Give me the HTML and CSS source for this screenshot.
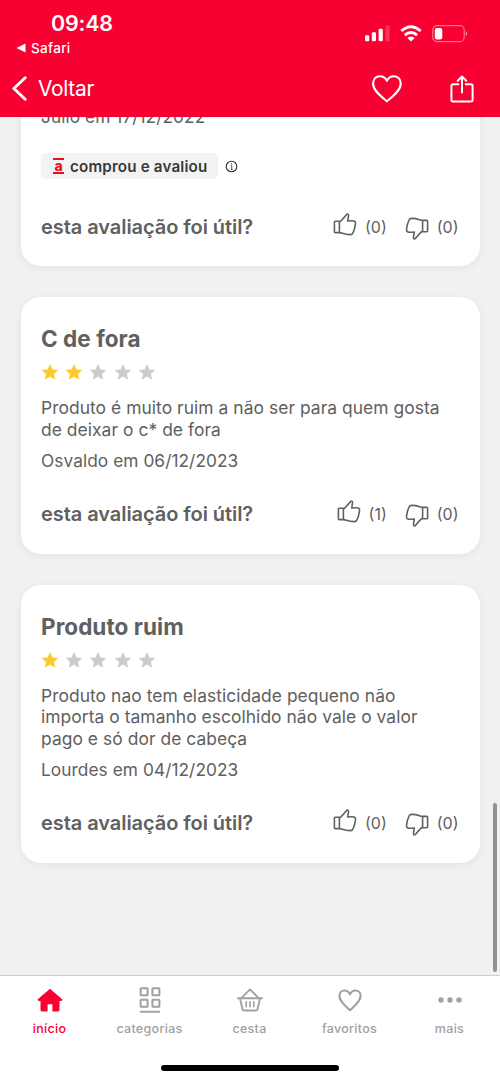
FILE: index.html
```html
<!DOCTYPE html>
<html lang="pt-BR">
<head>
<meta charset="utf-8">
<title>Avaliações</title>
<link rel="stylesheet" href="styles.css">
</head>
<body>
<svg class="defs" width="0" height="0">
  <symbol id="star" viewBox="0 0 18 18"><path d="M9 .9l2.400 5.500 5.900.5-4.400 4 1.300 5.800L9 13.600l-5.200 3.100 1.300-5.800-4.400-4 5.900-.5z"/></symbol>
  <symbol id="thumb" viewBox="0 0 24 24"><path d="M1.400 9.200q0-.9.900-.9h4.100v11.300H2.300q-.9 0-.9-.9zM6.400 9C9.200 7.200 11.600 3.900 13.600 1.500q.8-.8 1.500-.1.600.6.400 1.500l-.8 5.100q4.500-.5 6.400.1 1.700.5 1.400 2.500-.6 5-2.200 8.700-.8 2.200-2.600 2.300-4.400.1-8.300-1.400-1.500-.6-3-.6" fill="none" stroke="currentColor" stroke-width="1.600" stroke-linejoin="round" stroke-linecap="round"/></symbol>
</svg>
<div class="app">
  <header class="header">
    <div class="status">
      <div class="status-left">
        <div class="clock">09:48</div>
        <div class="back-app"><svg width="10" height="10" viewBox="0 0 10 10"><path d="M.5 5L9.500.6v8.800z" fill="#fff"/></svg><span>Safari</span></div>
      </div>
      <div class="status-icons">
        <svg width="25" height="17" viewBox="0 0 25 17" fill="#fff"><rect y="10.300" width="4.200" height="6" rx="1.200"/><rect x="6.800" y="7.300" width="4.200" height="9" rx="1.200"/><rect x="13.600" y="3.700" width="4.200" height="12.600" rx="1.200"/><rect x="20.400" y=".3" width="4.200" height="16" rx="1.200" opacity=".2"/></svg>
        <svg width="22" height="17" viewBox="0 0 22 17" fill="none" stroke="#fff" stroke-width="2.900"><path d="M1.300 6q9.700-8.500 19.400 0M4.800 10.200q6.200-5.400 12.400 0"/><path d="M7.400 13q3.600-2.900 7.200 0L11 16.600z" fill="#fff" stroke="none"/></svg>
        <svg width="36" height="18" viewBox="0 0 36 18"><rect x=".7" y=".7" width="31.500" height="16" rx="4.500" fill="none" stroke="#fff" stroke-opacity=".45" stroke-width="1.200"/><rect x="2.800" y="2.900" width="7.500" height="11.600" rx="2.300" fill="#fff"/><path d="M33.600 6v5q1.700-.7 1.700-2.500T33.600 6" fill="#fff" opacity=".5"/></svg>
      </div>
    </div>
    <nav class="navbar">
      <svg class="chevron" width="15" height="25" viewBox="0 0 15 25"><path d="M13.200 1.700L1.900 12.500l11.300 10.800" fill="none" stroke="#fff" stroke-width="2.900" stroke-linecap="round" stroke-linejoin="round"/></svg>
      <span class="nav-title">Voltar</span>
      <svg class="nav-heart" width="30" height="28" viewBox="0 0 30 28"><path d="M14.900 26.300C9.800 21.800 1.100 16 1.100 8.800 1.100 4.300 4 1.200 8 1.200q4.700 0 6.900 4.600 2.200-4.600 6.900-4.600c4 0 6.900 3.100 6.900 7.600 0 7.200-8.700 13-13.800 17.500z" fill="none" stroke="#fff" stroke-width="2.100" stroke-linejoin="round"/></svg>
      <svg class="nav-share" width="24" height="28" viewBox="0 0 24 28"><path d="M8.300 9.200H3.100q-1.700 0-1.700 1.700v13.800q0 1.700 1.700 1.700h17.800q1.700 0 1.700-1.700V10.900q0-1.700-1.700-1.700h-5.200M12 17.500V1.700M7.700 5.700L12 1.500l4.300 4.200" fill="none" stroke="#fff" stroke-width="2" stroke-linecap="round" stroke-linejoin="round"/></svg>
    </nav>
  </header>

  <main class="reviews">
    <article class="card card-cut">
      <div class="author a1"><span>Júlio em 17/12/2022</span></div>
      <div class="badge-row">
        <div class="badge"><span class="logo">a</span><span class="badge-text">comprou e avaliou</span></div>
        <svg width="13" height="13" viewBox="0 0 13 13"><circle cx="6.500" cy="6.500" r="5.300" fill="none" stroke="#333" stroke-width="1.100"/><path d="M5.800 5.700h.9v3.500M5.500 9.300h2.300" fill="none" stroke="#333" stroke-width=".8"/><circle cx="6.500" cy="3.900" r=".7" fill="#333"/></svg>
      </div>
      <div class="useful">
        <span class="question">esta avaliação foi útil?</span>
        <span class="vote up"><svg width="24" height="24"><use href="#thumb"/></svg><span>(0)</span></span>
        <span class="vote down"><svg width="24" height="24"><use href="#thumb"/></svg><span>(0)</span></span>
      </div>
    </article>

    <article class="card">
      <h2 class="title">C de fora</h2>
      <div class="stars"><svg class="on"><use href="#star"/></svg><svg class="on"><use href="#star"/></svg><svg><use href="#star"/></svg><svg><use href="#star"/></svg><svg><use href="#star"/></svg></div>
      <p class="text">Produto é muito ruim a não ser para quem gosta<br>de deixar o c* de fora</p>
      <div class="author">Osvaldo em 06/12/2023</div>
      <div class="useful">
        <span class="question">esta avaliação foi útil?</span>
        <span class="vote up"><svg width="24" height="24"><use href="#thumb"/></svg><span>(1)</span></span>
        <span class="vote down"><svg width="24" height="24"><use href="#thumb"/></svg><span>(0)</span></span>
      </div>
    </article>

    <article class="card">
      <h2 class="title">Produto ruim</h2>
      <div class="stars"><svg class="on"><use href="#star"/></svg><svg><use href="#star"/></svg><svg><use href="#star"/></svg><svg><use href="#star"/></svg><svg><use href="#star"/></svg></div>
      <p class="text">Produto nao tem elasticidade pequeno não<br>importa o tamanho escolhido não vale o valor<br>pago e só dor de cabeça</p>
      <div class="author">Lourdes em 04/12/2023</div>
      <div class="useful">
        <span class="question">esta avaliação foi útil?</span>
        <span class="vote up"><svg width="24" height="24"><use href="#thumb"/></svg><span>(0)</span></span>
        <span class="vote down"><svg width="24" height="24"><use href="#thumb"/></svg><span>(0)</span></span>
      </div>
    </article>
    <div class="scrollbar"></div>
  </main>

  <footer class="footer">
    <nav class="tabs">
      <div class="tab active">
        <svg width="28" height="28" viewBox="0 0 28 28"><path d="M14 2.800L1.800 13.300q-.6.700.2 1.200l1 .5q.9.200 1.500-.3v9.400q0 1.400 1.400 1.400h5.700v-7.200h4.800v7.200h5.700q1.400 0 1.400-1.400v-9.400q.6.500 1.500.3l1-.5q.8-.5.200-1.200z" fill="currentColor"/></svg>
        <span>início</span>
      </div>
      <div class="tab">
        <svg width="28" height="28" viewBox="0 0 28 28"><g fill="none" stroke="currentColor" stroke-width="2"><rect x="4.600" y="2.300" width="7" height="7" rx=".5"/><rect x="16.400" y="2.300" width="7" height="7" rx=".5"/><rect x="4.600" y="13.800" width="7" height="7" rx=".5"/><rect x="16.400" y="13.800" width="7" height="7" rx=".5"/><path d="M4.900 25.800h18.200" stroke-linecap="round"/></g></svg>
        <span>categorias</span>
      </div>
      <div class="tab">
        <svg width="28" height="28" viewBox="0 0 28 28"><g fill="none" stroke="currentColor" stroke-width="1.900" stroke-linecap="round" stroke-linejoin="round"><path d="M1.900 12.300h24.200M4 12.500l2.500 10.700q.3 1.300 1.500 1.300h12q1.200 0 1.500-1.300L24 12.500M5.500 11.800L14 3.300l8.500 8.500"/><path d="M10.200 15.800v5M14 15.800v5M17.800 15.800v5" stroke-width="1.600"/></g></svg>
        <span>cesta</span>
      </div>
      <div class="tab">
        <svg width="28" height="28" viewBox="0 0 28 28"><path d="M14 24.300C10.100 20.600 3.400 15.700 3.400 9.800c0-3.200 2.300-5.300 5.200-5.300q3.600 0 5.400 3.900 1.800-3.900 5.400-3.900c2.900 0 5.200 2.100 5.200 5.300 0 5.900-6.700 10.800-10.600 14.500z" fill="none" stroke="currentColor" stroke-width="2.200" stroke-linejoin="round"/></svg>
        <span>favoritos</span>
      </div>
      <div class="tab">
        <svg width="28" height="28" viewBox="0 0 28 28" fill="currentColor"><circle cx="5" cy="14" r="2.700"/><circle cx="14" cy="14" r="2.700"/><circle cx="23" cy="14" r="2.700"/></svg>
        <span>mais</span>
      </div>
    </nav>
    <div class="home-bar"></div>
  </footer>
</div>
</body>
</html>
```
FILE: styles.css
```css
* { box-sizing: border-box; }
body {
  margin: 0;
  font-family: Inter, "Liberation Sans", sans-serif;
  color: #606060;
}
svg { display: block; flex: none; }
.defs { position: absolute; }
.app {
  display: flex;
  flex-direction: column;
  width: 500px;
  height: 1082px;
  overflow: hidden;
  background: #f1f1f1;
}
.header {
  flex: none;
  height: 117px;
  background: #f80032;
  color: #fff;
  border-bottom: 1px solid #e3042f;
}
.status {
  display: flex;
  justify-content: space-between;
  height: 60px;
  padding: 9px 32px 0 16px;
}
.clock {
  padding-left: 35px;
  font-size: 21.500px;
  font-weight: 600;
  line-height: 28px;
  letter-spacing: -.2px;
}
.back-app {
  display: flex;
  align-items: center;
  gap: 5px;
  margin-top: 2px;
  font-size: 13.500px;
  font-weight: 500;
  line-height: 18px;
  letter-spacing: .3px;
}
.status-icons {
  display: flex;
  align-items: center;
  gap: 10px;
  height: 17px;
  margin-top: 16px;
}
.navbar {
  display: flex;
  align-items: center;
  height: 57px;
  padding: 0 26px 0 11.500px;
}
.nav-title {
  flex: 1;
  padding-left: 11.500px;
  font-size: 21px;
  letter-spacing: -.35px;
}
.nav-share { margin-left: 48px; }
.reviews {
  position: relative;
  flex: none;
  height: 858px;
  overflow: hidden;
}
.card {
  width: 459px;
  margin: 0 20.500px 31px;
  padding: 28px 21px 26.500px 20.500px;
  background: #fff;
  border-radius: 20px;
  box-shadow: 0 2px 8px rgba(0, 0, 0, .06);
}
.card-cut {
  margin-top: -11px;
  padding-top: 0;
  padding-bottom: 26px;
  border-radius: 0 0 20px 20px;
}
.title {
  margin: 0;
  font-size: 22.500px;
  font-weight: 700;
  line-height: 28px;
  letter-spacing: .05px;
}
.stars {
  display: flex;
  gap: 6.400px;
  margin: 10px 0 16px -.5px;
}
.stars svg { width: 18px; height: 18px; fill: #cbcbcb; }
.stars .on { fill: #ffc927; }
.text {
  margin: 0;
  font-size: 17.400px;
  line-height: 21.500px;
  letter-spacing: .06px;
  white-space: nowrap;
}
.author {
  margin-top: 10px;
  font-size: 17.300px;
  line-height: 22px;
  letter-spacing: .06px;
}
.a1 { margin-top: 0; }
.badge-row {
  display: flex;
  align-items: center;
  gap: 8px;
  margin-top: 25px;
}
.badge {
  display: flex;
  align-items: center;
  width: 176.500px;
  height: 26px;
  padding-left: 12px;
  gap: 6px;
  border-radius: 5px;
  background: #f3f3f3;
}
.badge-text {
  font-size: 15.200px;
  font-weight: 600;
  color: #383838;
  letter-spacing: .17px;
  white-space: nowrap;
}
.badge-row > svg { margin-left: -.5px; }
.logo {
  width: 11px;
  height: 16px;
  border-top: 2px solid #e8101c;
  border-bottom: 2px solid #e8101c;
  color: #e8101c;
  font-size: 14px;
  font-weight: 800;
  line-height: 11px;
  text-align: center;
}
.useful {
  display: flex;
  align-items: center;
  height: 26px;
  margin-top: 29px;
}
.badge-row + .useful { margin-top: 35px; }
.question {
  flex: 1;
  font-size: 20px;
  font-weight: 600;
  letter-spacing: -.06px;
  white-space: nowrap;
}
.vote {
  display: flex;
  align-items: center;
  gap: 8px;
  font-size: 16px;
}
.up svg { margin-top: -4px; }
.down { margin-left: 18px; }
.down svg { transform: rotate(180deg); margin-top: 2px; }
.scrollbar {
  position: absolute;
  right: 3.500px;
  top: 686px;
  width: 4px;
  height: 169px;
  border-radius: 2px;
  background: #929292;
}
.footer {
  flex: 1;
  background: #fff;
  border-top: 1px solid #cfcfcf;
}
.tabs {
  display: grid;
  grid-template-columns: repeat(5, 100px);
  width: 499px;
  height: 89px;
  padding-top: 10px;
}
.tab {
  display: flex;
  flex-direction: column;
  align-items: center;
  gap: 7px;
  color: #a1a1a1;
  font-size: 12.500px;
  font-weight: 500;
  line-height: 16px;
  letter-spacing: .3px;
}
.tab span { margin-left: -1px; }
.active { color: #f80032; }
.home-bar {
  width: 178px;
  height: 6px;
  margin: 0 auto;
  border-radius: 3px;
  background: #000;
}
```
